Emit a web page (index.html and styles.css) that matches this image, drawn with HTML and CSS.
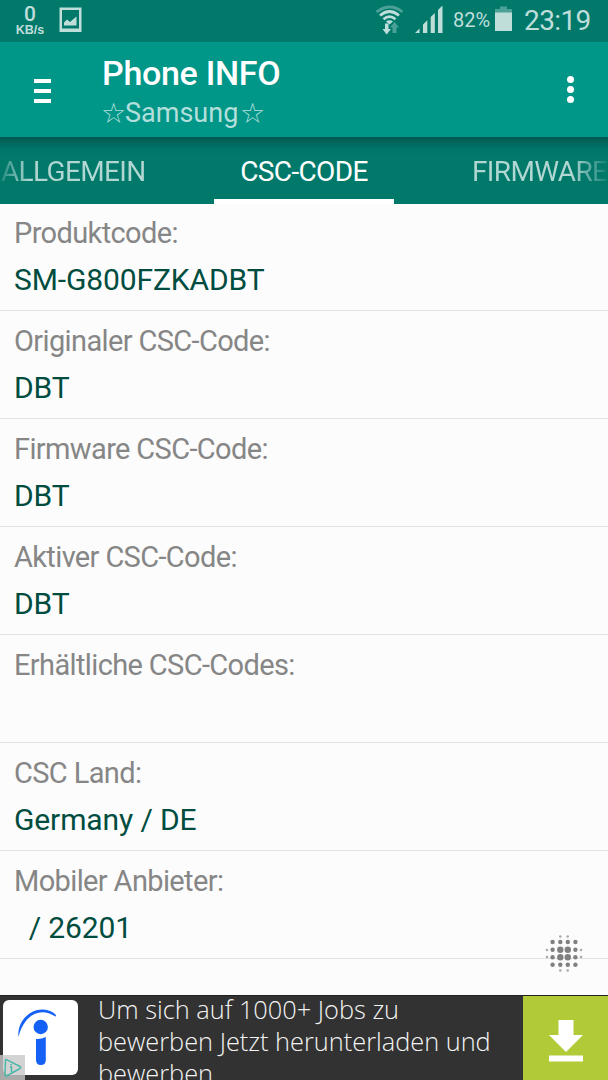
FILE: index.html
```html
<!DOCTYPE html>
<html lang="de">
<head>
<meta charset="utf-8">
<meta name="viewport" content="width=device-width, initial-scale=1.0">
<title>Phone INFO</title>
<link rel="stylesheet" href="styles.css">
</head>
<body>
<div class="statusbar">
<div class="speed"><span class="num">0</span><span class="unit">KB/s</span></div>
<svg class="picture" width="24" height="26" viewBox="0 0 24 26">
<path fill-rule="evenodd" d="M0.5 0.5H22.5V25H0.5ZM3 3V21.500H20V3Z"/>
<path d="M5 18.500V15.500L8 12.500L11 15L17.500 9.500V18.500Z"/>
</svg>
<svg class="wifi" width="30" height="30" viewBox="0 0 30 30">
<g fill="none" stroke-width="2.800">
<path class="dim" d="M1.500 7Q15 -3 27.500 7"/>
<path d="M5 10.500Q14.500 2.500 24 10.500"/>
<path d="M8.500 14.200Q14.500 9 20.500 14.200"/>
</g>
<path d="M11 16.500Q14.500 14 18 16.500L14.500 19.500Z"/>
<path d="M10 18.500H13.500V24H16L11.700 29.500L7.500 24H10Z"/>
<path class="dimfill" d="M17.500 28H21.500V22.500H24L19.500 17L15 22.500H17.500Z"/>
</svg>
<svg class="signal" width="28" height="27" viewBox="0 0 28 27">
<path d="M0 27L4.500 22.500V27ZM8 27V18.500L12.300 14.200V27ZM15.700 27V11L19.800 7V27ZM23 27V4L27.500 -0.500V27Z"/>
</svg>
<span class="percent">82%</span>
<svg class="battery" width="17" height="26" viewBox="0 0 17 26">
<path class="dimfill" d="M0 3H5V0.500H12V3H17V7H0Z"/>
<path d="M0 6.500H17V25H0Z"/>
</svg>
<span class="clock">23:19</span>
</div>

<div class="toolbar">
<div class="menu"><i></i><i></i><i></i></div>
<div class="titles">
<div class="title">Phone INFO</div>
<div class="subtitle"><span class="star">☆</span><span class="brand">Samsung</span><span class="star">☆</span></div>
</div>
<div class="more"><i></i><i></i><i></i></div>
</div>

<div class="tabs">
<div class="tab first">ALLGEMEIN</div>
<div class="tab active">CSC-CODE</div>
<div class="tab last">FIRMWARE</div>
</div>

<div class="list">
<div class="row"><div class="label">Produktcode:</div><div class="value">SM-G800FZKADBT</div></div>
<div class="row"><div class="label">Originaler CSC-Code:</div><div class="value">DBT</div></div>
<div class="row"><div class="label">Firmware CSC-Code:</div><div class="value">DBT</div></div>
<div class="row"><div class="label">Aktiver CSC-Code:</div><div class="value">DBT</div></div>
<div class="row"><div class="label">Erhältliche CSC-Codes:</div><div class="value"></div></div>
<div class="row"><div class="label">CSC Land:</div><div class="value">Germany / DE</div></div>
<div class="row"><div class="label">Mobiler Anbieter:</div><div class="value">&nbsp; / 26201</div></div>
<svg class="dots" width="38" height="38" viewBox="0 0 38 38">
<g class="small">
<circle cx="15.300" cy="1.500" r="1.300"/><circle cx="22.700" cy="1.500" r="1.300"/>
<circle cx="15.300" cy="35.500" r="1.300"/><circle cx="22.700" cy="35.500" r="1.300"/>
<circle cx="2" cy="15" r="1.300"/><circle cx="2" cy="22" r="1.300"/>
<circle cx="36" cy="15" r="1.300"/><circle cx="36" cy="22" r="1.300"/>
</g>
<circle cx="7.600" cy="7" r="2.200"/><circle cx="15.300" cy="7" r="2.200"/><circle cx="22.800" cy="7" r="2.200"/><circle cx="30.400" cy="7" r="2.200"/>
<circle cx="7.600" cy="14.700" r="2.200"/><circle cx="15.300" cy="14.700" r="3.200"/><circle cx="22.800" cy="14.700" r="3.200"/><circle cx="30.400" cy="14.700" r="2.200"/>
<circle cx="7.600" cy="22.200" r="2.200"/><circle cx="15.300" cy="22.200" r="3.200"/><circle cx="22.800" cy="22.200" r="3.200"/><circle cx="30.400" cy="22.200" r="2.200"/>
<circle cx="7.600" cy="29.800" r="2.200"/><circle cx="15.300" cy="29.800" r="2.200"/><circle cx="22.800" cy="29.800" r="2.200"/><circle cx="30.400" cy="29.800" r="2.200"/>
</svg>
</div>

<div class="ad">
<div class="logo">
<svg width="75" height="75" viewBox="0 0 75 75">
<path d="M15.500 37C14 21 27 9 40 9.500Q48 10 52.500 14.500Q53.500 16 52.500 16.500C35 5 20 18 15.500 37Z"/>
<circle cx="37.700" cy="27" r="7.200"/>
<path d="M33 39Q38 39.500 42.800 37V60Q42.800 65 37.900 65T33 60Z"/>
</svg>
</div>
<div class="adtext"><div>Um sich auf 1000+ Jobs zu</div><div>bewerben Jetzt herunterladen und</div><div>bewerben</div></div>
<div class="download">
<svg width="34" height="42" viewBox="0 0 34 42">
<path d="M9.500 0H24.500V15H34L17 32L0 15H9.500ZM0 35.500H34V41.500H0Z"/>
</svg>
</div>
<div class="adchoice">
<svg width="25" height="25" viewBox="0 0 25 25">
<path d="M5.500 5Q5 4 6.500 4.700L20 11.500Q21.500 12.500 20 13.500L6.500 21Q5 21.500 5 20Z"/>
<path d="M11 9V10.500M10 12H11.500V17"/>
</svg>
</div>
</div>
</body>
</html>
```

FILE: styles.css
```css
* {
    box-sizing: border-box;
}

body{
margin:0;
width:608px;
height:1080px;
overflow:hidden;
display:flex;
flex-direction:column;
background:#fcfcfc;
font-family:Roboto, "Liberation Sans", sans-serif;
}

.statusbar{
height:42px;
flex:none;
display:flex;
align-items:flex-start;
background:#00796b;
color:#bfdeda;
fill:#bfdeda;
}

.speed{
width:44px;
margin-left:8px;
padding-top:4px;
display:flex;
flex-direction:column;
align-items:center;
font-weight:500;
}
.num{
font-size:21px;
line-height:21px;
}
.unit{
font-size:12.5px;
line-height:11px;
font-weight:700;
font-family:"Liberation Sans", sans-serif;
}

.picture{
margin:7px 0 0 7px;
}

.wifi{
margin:5px 0 0 292px;
}
.wifi g{
stroke:#bfdeda;
}
.wifi .dim{
stroke:#4ba196;
}
.dimfill{
fill:#4ba196;
}

.signal{
margin:6px 0 0 10px;
}

.percent{
width:37px;
margin:9px 0 0 10px;
font-size:20px;
line-height:23px;
}

.battery{
margin:6px 0 0 5px;
}

.clock{
margin:4px 0 0 12px;
font-size:28px;
line-height:33px;
letter-spacing:-0.6px;
}

.toolbar{
height:95px;
flex:none;
display:flex;
align-items:flex-start;
background:#009688;
}

.menu{
width:17px;
margin:37px 0 0 34px;
display:grid;
gap:6px;
}
.menu i{
height:4px;
background:white;
}

.titles{
margin-left:51px;
padding-top:11px;
width:300px;
}
.title{
font-size:34px;
line-height:40px;
font-weight:500;
letter-spacing:-0.3px;
color:white;
}
.subtitle{
display:flex;
margin-left:-1px;
font-size:27px;
line-height:41px;
color:#b2dfdb;
}
.star{
font-family:"DejaVu Sans", sans-serif;
font-size:28px;
letter-spacing:-1px;
width:24px;
}
.brand{
width:115px;
}

.more{
margin:34px 0 0 165px;
display:grid;
gap:3px;
}
.more i{
width:7px;
height:7px;
border-radius:50%;
background:white;
}

.tabs{
height:67px;
flex:none;
display:flex;
background:linear-gradient(#00594f, #00655a 5px, #007468 12px, #00796b 20px);
font-size:28px;
line-height:70px;
letter-spacing:-0.65px;
white-space:nowrap;
overflow:hidden;
}
.tab{
flex:none;
}
.first{
width:214px;
padding-left:1px;
background-image:linear-gradient(to right, #1f897d, #b2d7d3 30px);
-webkit-background-clip:text;
color:transparent;
}
.active{
width:180px;
text-align:center;
color:white;
border-bottom:5px solid white;
}
.last{
width:214px;
padding-left:78px;
background-image:linear-gradient(to left, #0c7f72, #b2d7d3 36px);
-webkit-background-clip:text;
color:transparent;
}

.list{
position:relative;
height:791px;
flex:none;
}
.row{
height:108px;
padding:9px 14px 0;
border-bottom:1px solid #e2e2e2;
}
.row:first-child{
height:107px;
padding-top:8px;
}
.label{
font-size:29px;
line-height:42px;
letter-spacing:-0.63px;
color:#868686;
}
.value{
font-size:30px;
line-height:52px;
letter-spacing:-0.12px;
color:#004d40;
}

/* floating above the list */
.dots{
position:absolute;
right:25px;
top:731px;
fill:#808080;
}
.small{
fill:#aaaaaa;
}

.ad{
position:relative;
height:85px;
flex:none;
display:flex;
background:#323232;
border-top:1px solid #202020;
overflow:hidden;
}
.logo{
width:75px;
height:75px;
margin:4px 1px 0 3px;
flex:none;
border-radius:6px;
background:white;
fill:#1560f5;
}
.adtext{
width:425px;
margin-left:19px;
margin-top:-3px;
flex:none;
font-family:"Open Sans", sans-serif;
font-weight:300;
font-size:25.35px;
line-height:32px;
color:#f4f4f4;
white-space:nowrap;
}
.download{
width:85px;
margin-top:-1px;
flex:none;
display:flex;
justify-content:center;
padding-top:25px;
background:#b0cb37;
fill:white;
}
.adchoice{
position:absolute;
left:0;
bottom:0;
width:25px;
height:25px;
background:rgba(200,200,200,0.8);
fill:none;
stroke:#4cb8a8;
stroke-width:1.5;
}
```
